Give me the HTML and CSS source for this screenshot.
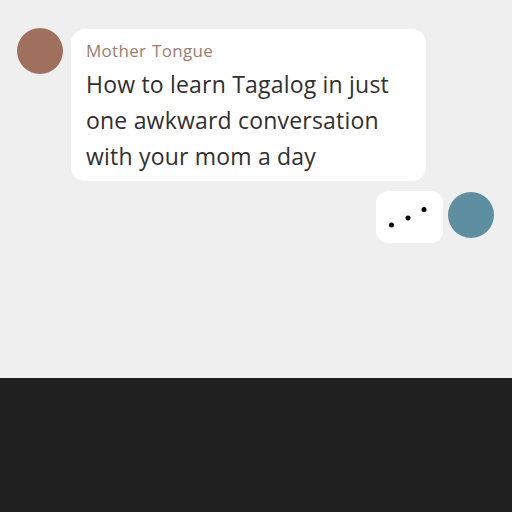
FILE: index.html
```html
<!DOCTYPE html>
<html lang="en">
<head>
    <meta charset="UTF-8">
    <meta name="viewport" content="width=device-width, initial-scale=1.0">
    <title>Chat</title>
    <link rel="stylesheet" href="styles.css">
</head>
<body>
    <div class="chat">
        <div class="row">
            <div class="avatar mom"></div>
            <div class="bubble">
                <p class="name">Mother Tongue</p>
                <p class="message">How to learn Tagalog in just one awkward conversation with your mom a day</p>
            </div>
        </div>
        <div class="row me">
            <div class="bubble typing">
                <svg width="67" height="52" viewBox="0 0 67 52">
                    <circle cx="15.5" cy="34" r="2.5" fill="#000"/>
                    <circle cx="32" cy="27" r="2.5" fill="#000"/>
                    <circle cx="48" cy="18.5" r="2.5" fill="#000"/>
                </svg>
            </div>
            <div class="avatar you"></div>
        </div>
    </div>
    <div class="footer"></div>
</body>
</html>
```

FILE: styles.css
```css
* {
    margin: 0;
    padding: 0;
    box-sizing: border-box;
    font-family: 'Open Sans', 'Noto Sans', sans-serif;
}
body {
    background: #202020;
    width: 512px;
    height: 512px;
    overflow: hidden;
}
.chat {
    height: 378px;
    background: #efefef;
    padding: 28px 18px 0 17px;
}
.row {
    display: flex;
    align-items: flex-start;
    gap: 8px;
}
.row.me {
    justify-content: flex-end;
    gap: 5px;
    margin-top: 10px;
}
.avatar {
    width: 46px;
    height: 46px;
    border-radius: 50%;
    flex-shrink: 0;
}
.mom {
    background: #a0705f;
}
.you {
    background: #5e8fa0;
    margin-top: 1px;
}
.bubble {
    background: #fff;
    border-radius: 14px;
    width: 355px;
    margin-top: 1px;
    padding: 10px 15px 7px;
}
.name {
    font-size: 17px;
    line-height: 24px;
    letter-spacing: 0.3px;
    word-spacing: 1px;
    color: #a07b6f;
}
.message {
    margin-top: 3px;
    font-size: 23px;
    line-height: 36px;
    letter-spacing: 0.2px;
    color: #303030;
}
.typing {
    width: 67px;
    height: 52px;
    padding: 0;
    margin-top: 0;
    border-radius: 12px;
}
.typing svg {
    display: block;
}
.footer {
    height: 134px;
    background: #202020;
}
```
